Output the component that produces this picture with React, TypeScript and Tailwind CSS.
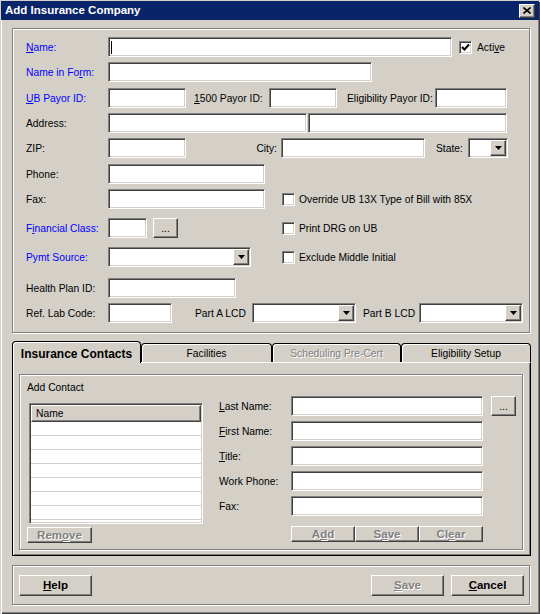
import type { ReactNode } from 'react'

const sunken =
  'bg-white border border-t-[#808080] border-l-[#808080] border-b-white border-r-white shadow-[inset_1px_1px_0_#404040,inset_-1px_-1px_0_#d4d0c8]'
const raised =
  'bg-[#d4d0c8] border border-t-white border-l-white border-b-[#404040] border-r-[#404040] shadow-[inset_-1px_-1px_0_#808080]'
const etched = 'border border-[#808080] shadow-[inset_1px_1px_0_#fff,1px_1px_0_#fff]'
const greyed = 'text-[#808080] [text-shadow:1px_1px_0_#fff]'
const tab =
  'h-[19px] shrink-0 border-t border-l border-r border-black rounded-t-[4px] shadow-[inset_1px_1px_0_#fff] flex items-center justify-center'

function U({ children }: { children: ReactNode }) {
  return <span className="underline underline-offset-[1px]">{children}</span>
}

function Label({ children, blue }: { children: ReactNode; blue?: boolean }) {
  return (
    <div className={`w-[82px] shrink-0 whitespace-nowrap ${blue ? 'text-[#0000ff]' : ''}`}>
      {children}
    </div>
  )
}

function Input({ w, caret }: { w: string; caret?: boolean }) {
  return (
    <div className={`${sunken} ${w} h-[20px] shrink-0 flex items-center pl-[2px]`}>
      {caret && <div className="w-[1px] h-[13px] bg-black" />}
    </div>
  )
}

function Arrow() {
  return (
    <svg width="7" height="4" viewBox="0 0 7 4">
      <polygon points="0,0 7,0 3.5,4" fill="#000" />
    </svg>
  )
}

function Combo({ w }: { w: string }) {
  return (
    <div className={`${sunken} ${w} h-[20px] shrink-0 flex justify-end p-[1px]`}>
      <div className={`${raised} w-[16px] h-full flex items-center justify-center`}>
        <Arrow />
      </div>
    </div>
  )
}

function Check({ checked }: { checked?: boolean }) {
  return (
    <div className={`${sunken} w-[13px] h-[13px] shrink-0 flex items-center justify-center`}>
      {checked && (
        <svg width="9" height="9" viewBox="0 0 9 9">
          <path d="M1 4 L3.5 6.5 L8 1.5" stroke="#000" strokeWidth="2" fill="none" />
        </svg>
      )}
    </div>
  )
}

function Btn({
  w,
  h,
  disabled,
  children,
  className = '',
}: {
  w: string
  h: string
  disabled?: boolean
  children: ReactNode
  className?: string
}) {
  return (
    <div
      className={`${raised} ${w} ${h} shrink-0 flex items-center justify-center font-bold text-[11.5px] ${
        disabled ? greyed : ''
      } ${className}`}
    >
      {children}
    </div>
  )
}

export default function App() {
  const contactFields: [ReactNode, boolean][] = [
    [<><U>L</U>ast Name:</>, true],
    [<><U>F</U>irst Name:</>, false],
    [<><U>T</U>itle:</>, false],
    ['Work Phone:', false],
    ['Fax:', false],
  ]

  return (
    <div className="w-[540px] h-[614px] bg-[#d4d0c8] font-['Liberation_Sans',Arial,sans-serif] text-[10.3px] leading-[13px] text-black flex flex-col shadow-[inset_1px_1px_0_#d4d0c8,inset_2px_2px_0_#fff,inset_-1px_-1px_0_#404040,inset_-2px_-2px_0_#808080] select-none">
      {/* Title bar */}
      <div className="mx-[1px] mt-[1px] h-[19px] bg-[#0a246a] flex items-center justify-between pl-[4px] pr-[4px]">
        <span className="text-white font-bold text-[11.5px]">Add Insurance Company</span>
        <div className={`${raised} w-[16px] h-[14px] flex items-center justify-center`}>
          <svg width="8" height="7" viewBox="0 0 8 7">
            <path d="M0.5 0.5 L7.5 6.5 M7.5 0.5 L0.5 6.5" stroke="#000" strokeWidth="1.6" />
          </svg>
        </div>
      </div>

      {/* Company details */}
      <div className={`${etched} ml-[12px] mt-[8px] w-[518px] h-[305px] pl-[13px] pt-[8px] flex flex-col`}>
        <div className="flex items-center h-[20px]">
          <Label blue>
            <U>N</U>ame:
          </Label>
          <Input w="w-[344px]" caret />
          <div className="ml-[7px]">
            <Check checked />
          </div>
          <span className="ml-[5px]">
            Acti<U>v</U>e
          </span>
        </div>

        <div className="flex items-center h-[20px] mt-[5px]">
          <Label blue>
            Name in Fo<U>r</U>m:
          </Label>
          <Input w="w-[264px]" />
        </div>

        <div className="flex items-center h-[20px] mt-[6px]">
          <Label blue>
            <U>U</U>B Payor ID:
          </Label>
          <Input w="w-[78px]" />
          <div className="w-[75px] ml-[8px] shrink-0 whitespace-nowrap">
            <U>1</U>500 Payor ID:
          </div>
          <Input w="w-[68px]" />
          <div className="w-[88px] ml-[10px] shrink-0 whitespace-nowrap">Eligibility Payor ID:</div>
          <Input w="w-[72px]" />
        </div>

        <div className="flex items-center h-[20px] mt-[5px]">
          <Label>Address:</Label>
          <Input w="w-[199px]" />
          <div className="ml-[1px]">
            <Input w="w-[199px]" />
          </div>
        </div>

        <div className="flex items-center h-[20px] mt-[5px]">
          <Label>ZIP:</Label>
          <Input w="w-[78px]" />
          <div className="w-[95px] shrink-0 text-right pr-[4px]">City:</div>
          <Input w="w-[144px]" />
          <div className="w-[43px] shrink-0 pl-[11px]">State:</div>
          <Combo w="w-[40px]" />
        </div>

        <div className="flex items-center h-[20px] mt-[6px]">
          <Label>Phone:</Label>
          <Input w="w-[157px]" />
        </div>

        <div className="flex items-center h-[20px] mt-[5px]">
          <Label>Fax:</Label>
          <Input w="w-[157px]" />
          <div className="ml-[17px]">
            <Check />
          </div>
          <span className="ml-[4px]">Override UB 13X Type of Bill with 85X</span>
        </div>

        <div className="flex items-center h-[20px] mt-[9px]">
          <Label blue>
            F<U>i</U>nancial Class:
          </Label>
          <Input w="w-[39px]" />
          <div className={`${raised} ml-[6px] w-[25px] h-[20px] shrink-0 flex items-center justify-center`}>
            ...
          </div>
          <div className="ml-[104px]">
            <Check />
          </div>
          <span className="ml-[4px]">Print DRG on UB</span>
        </div>

        <div className="flex items-center h-[20px] mt-[9px]">
          <Label blue>Pymt Source:</Label>
          <Combo w="w-[143px]" />
          <div className="ml-[31px]">
            <Check />
          </div>
          <span className="ml-[4px]">Exclude Middle Initial</span>
        </div>

        <div className="flex items-center h-[20px] mt-[11px]">
          <Label>Health Plan ID:</Label>
          <Input w="w-[128px]" />
        </div>

        <div className="flex items-center h-[20px] mt-[5px]">
          <Label>Ref. Lab Code:</Label>
          <Input w="w-[64px]" />
          <div className="w-[80px] shrink-0 pl-[23px] whitespace-nowrap">Part A LCD</div>
          <Combo w="w-[104px]" />
          <div className="w-[63px] shrink-0 pl-[7px] whitespace-nowrap">Part B LCD</div>
          <Combo w="w-[104px]" />
        </div>
      </div>

      {/* Tabs */}
      <div className="ml-[12px] mt-[8px] w-[519px] h-[21px] flex items-end">
        <div className="relative z-10 -mb-[1px] w-[129px] h-[22px] shrink-0 bg-[#d4d0c8] border-t border-l border-r border-black rounded-t-[4px] shadow-[inset_1px_1px_0_#fff] flex items-center justify-center pt-[3px] font-bold text-[12px]">
          Insurance Contacts
        </div>
        <div className={`${tab} w-[131px]`}>Facilities</div>
        <div className={`${tab} w-[129px] ${greyed}`}>Scheduling Pre-Cert</div>
        <div className={`${tab} w-[130px]`}>Eligibility Setup</div>
      </div>

      {/* Tab panel */}
      <div className="ml-[12px] w-[519px] h-[194px] border border-black border-t-white shadow-[inset_1px_0_0_#fff,inset_-1px_-1px_0_#808080] flex flex-col">
        <div className={`${etched} ml-[6px] mt-[11px] w-[504px] h-[176px] flex`}>
          <div className="w-[183px] shrink-0 pl-[7px] pt-[6px] flex flex-col">
            <div>Add Contact</div>
            <div className={`${sunken} ml-[2px] mt-[9px] w-[174px] h-[121px] flex flex-col p-[1px]`}>
              <div className={`${raised} h-[17px] shrink-0 flex items-center pl-[4px]`}>Name</div>
              {[0, 1, 2, 3, 4, 5, 6].map((i) => (
                <div key={i} className="h-[14px] shrink-0 border-b border-[#d4d0c8]" />
              ))}
            </div>
            <Btn w="w-[65px]" h="h-[16px]" disabled className="mt-[3px]">
              Rem<U>o</U>ve
            </Btn>
          </div>

          <div className="ml-[16px] pt-[21px] flex flex-col gap-[5px]">
            {contactFields.map(([label, lookup], i) => (
              <div key={i} className="flex items-center h-[20px]">
                <div className="w-[72px] shrink-0 whitespace-nowrap">{label}</div>
                <Input w="w-[192px]" />
                {lookup && (
                  <div className={`${raised} ml-[8px] w-[25px] h-[20px] shrink-0 flex items-center justify-center`}>
                    ...
                  </div>
                )}
              </div>
            ))}
            <div className="flex ml-[72px] mt-[5px]">
              <Btn w="w-[64px]" h="h-[16px]" disabled>
                A<U>d</U>d
              </Btn>
              <Btn w="w-[64px]" h="h-[16px]" disabled>
                S<U>a</U>ve
              </Btn>
              <Btn w="w-[64px]" h="h-[16px]" disabled>
                Cl<U>e</U>ar
              </Btn>
            </div>
          </div>
        </div>
      </div>

      {/* Dialog buttons */}
      <div className={`${etched} ml-[12px] mt-[9px] w-[518px] h-[40px] flex items-center pl-[6px] pr-[5px]`}>
        <Btn w="w-[73px]" h="h-[21px]">
          <U>H</U>elp
        </Btn>
        <div className="flex-1" />
        <Btn w="w-[73px]" h="h-[21px]" disabled>
          <U>S</U>ave
        </Btn>
        <Btn w="w-[73px]" h="h-[21px]" className="ml-[7px]">
          <U>C</U>ancel
        </Btn>
      </div>
    </div>
  )
}
